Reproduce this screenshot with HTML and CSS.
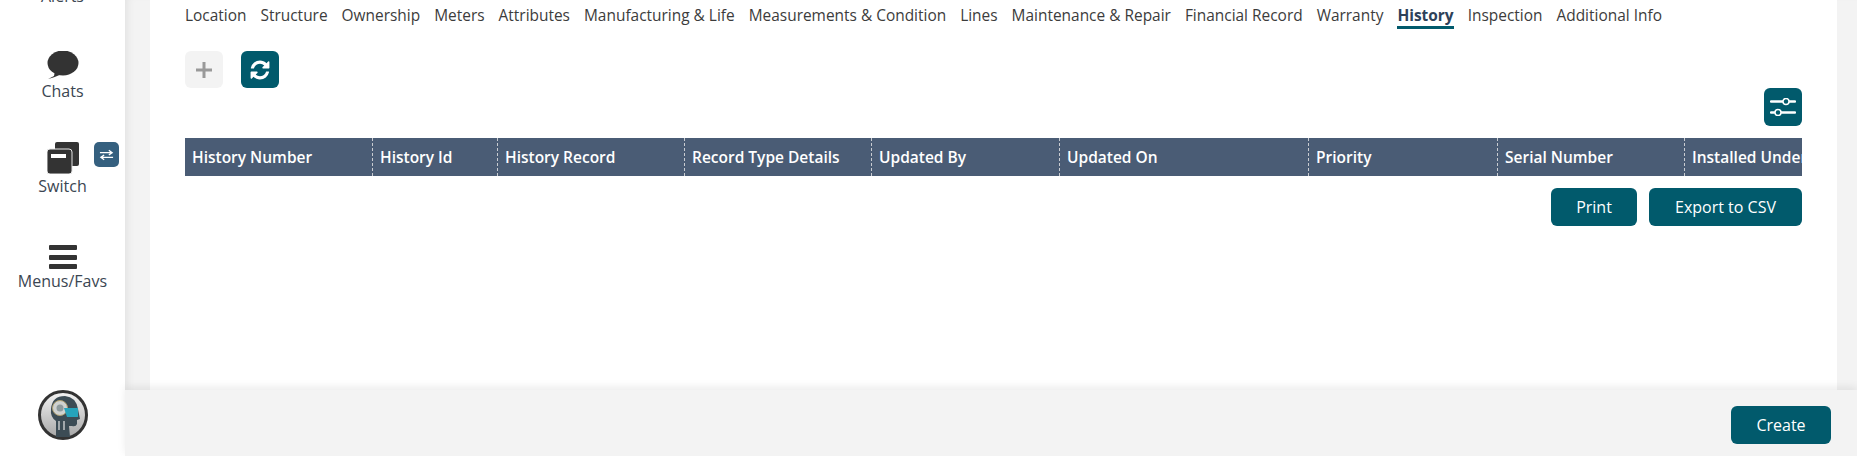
FILE: index.html
```html
<!DOCTYPE html>
<html lang="en">
<head>
  <meta charset="UTF-8" />
  <title>History</title>
  <link rel="stylesheet" href="styles.css">
</head>
<body>

  <nav class="sidebar">
    <div class="side-item side-alerts">
      <span class="side-label">Alerts</span>
    </div>
    <div class="side-item">
      <svg class="side-icon" viewBox="0 0 32 28" width="32" height="28">
        <ellipse cx="16" cy="12" rx="15.5" ry="12.5" fill="#333"/>
        <path d="M8 20 L7 25 L1 28 Q6 27 15 23 Z" fill="#333"/>
      </svg>
      <span class="side-label">Chats</span>
    </div>
    <div class="side-item">
      <svg class="side-icon" viewBox="0 0 32 32" width="32" height="32">
        <rect x="8" y="0" width="24" height="24" rx="2" fill="#333"/>
        <rect x="0" y="7" width="25" height="25" rx="3" fill="#333" stroke="#e6e6e6" stroke-width="1"/>
        <rect x="4" y="12" width="15" height="4" fill="#fff"/>
      </svg>
      <span class="side-label">Switch</span>
      <span class="switch-badge">
        <svg viewBox="0 0 16 12" width="15" height="12">
          <path d="M1 3.5H13M10.5 1L14 3.5L10.5 6M15 8.5H3M5.500 6L2 8.5L5.500 11" fill="none" stroke="#fff" stroke-width="1.4"/>
        </svg>
      </span>
    </div>
    <div class="side-item">
      <svg class="side-icon" viewBox="0 0 28 24" width="28" height="24">
        <rect y="0" width="28" height="5" rx="1" fill="#333"/>
        <rect y="10" width="28" height="5" rx="1" fill="#333"/>
        <rect y="19" width="28" height="5" rx="1" fill="#333"/>
      </svg>
      <span class="side-label">Menus/Favs</span>
    </div>
    <div class="avatar">
      <svg viewBox="0 0 50 50" width="50" height="50">
        <defs>
          <linearGradient id="avatarBg" x1="0" y1="0" x2="0" y2="1">
            <stop offset="0" stop-color="#f4f4f4"/>
            <stop offset="1" stop-color="#a5a5a5"/>
          </linearGradient>
        </defs>
        <circle cx="25" cy="25" r="23.500" fill="url(#avatarBg)" stroke="#333" stroke-width="3"/>
        <path d="M13 19 Q14 6 27 6 Q38 7 40 19 L42 29 L39 30 L39 34 Q38 37 34 36 L31 36 L32 47 L18 47 L18 31 Q12 27 13 19 Z" fill="#3c4c55"/>
        <circle cx="22" cy="18" r="7.500" fill="#cfd2d0" stroke="#b0a070" stroke-width="1"/>
        <circle cx="22" cy="18" r="3.500" fill="#8d9a9c"/>
        <path d="M26 18 L40 18 L40 27 L29 27 Z" fill="#26a3bb"/>
        <path d="M21 31V40M26 31V40" stroke="#e4e4e4" stroke-width="1.200"/>
      </svg>
    </div>
  </nav>

  <div class="main">
    <div class="work">
      <div class="panel">
        <ul class="tabs">
          <li>Location</li>
          <li>Structure</li>
          <li>Ownership</li>
          <li>Meters</li>
          <li>Attributes</li>
          <li>Manufacturing &amp; Life</li>
          <li>Measurements &amp; Condition</li>
          <li>Lines</li>
          <li>Maintenance &amp; Repair</li>
          <li>Financial Record</li>
          <li>Warranty</li>
          <li class="active">History</li>
          <li>Inspection</li>
          <li>Additional Info</li>
        </ul>

        <div class="toolbar">
          <button class="icon-btn disabled">
            <svg viewBox="0 0 16 16" width="16" height="16">
              <path d="M6.5 0h3v6.5H16v3H9.5V16h-3V9.500H0v-3h6.500z" fill="#999"/>
            </svg>
          </button>
          <button class="icon-btn">
            <svg viewBox="0 0 1792 1792" width="22" height="22">
              <path fill="#fff" d="M1639 1056q0 5-1 7-64 268-268 434.500t-478 166.500q-146 0-282.500-55t-243.500-157l-129 129q-19 19-45 19t-45-19-19-45v-448q0-26 19-45t45-19h448q26 0 45 19t19 45-19 45l-137 137q71 66 161 102t187 36q134 0 250-65t186-179q11-17 53-117 8-23 30-23h192q13 0 22.500 9.500t9.500 22.500zm25-800v448q0 26-19 45t-45 19h-448q-26 0-45-19t-19-45 19-45l138-138q-148-137-349-137-134 0-250 65t-186 179q-11 17-53 117-8 23-30 23h-199q-13 0-22.500-9.500t-9.500-22.500v-7q65-268 270-434.500t480-166.500q146 0 284 55.500t245 156.500l130-129q19-19 45-19t45 19 19 45z"/>
            </svg>
          </button>
        </div>

        <div class="settings-row">
          <button class="icon-btn">
            <svg viewBox="0 0 26 18" width="26" height="18">
              <path d="M1 3.500H25M1 14.500H25" stroke="#fff" stroke-width="2.500" stroke-linecap="round"/>
              <circle cx="16" cy="3.500" r="3" fill="#015a6c" stroke="#fff" stroke-width="1.500"/>
              <circle cx="8" cy="14.500" r="3" fill="#015a6c" stroke="#fff" stroke-width="1.500"/>
            </svg>
          </button>
        </div>

        <div class="grid-head">
          <div class="col c1">History Number</div>
          <div class="col c2">History Id</div>
          <div class="col c3">History Record</div>
          <div class="col c4">Record Type Details</div>
          <div class="col c5">Updated By</div>
          <div class="col c6">Updated On</div>
          <div class="col c7">Priority</div>
          <div class="col c8">Serial Number</div>
          <div class="col c9">Installed Under</div>
        </div>

        <div class="grid-actions">
          <button class="btn btn-print">Print</button>
          <button class="btn btn-export">Export to CSV</button>
        </div>
      </div>
    </div>

    <footer class="footer">
      <button class="btn btn-create">Create</button>
    </footer>
  </div>

</body>
</html>
```

FILE: styles.css
```css
* {
  box-sizing: border-box;
}

html, body {
  margin: 0;
  padding: 0;
  height: 456px;
  overflow: hidden;
}

body {
  display: flex;
  font-family: 'Open Sans', sans-serif;
  font-size: 14px;
  color: #333;
  background: #f3f3f3;
}

/* left menu */
.sidebar {
  position: relative;
  width: 125px;
  flex: none;
  height: 456px;
  background: white;
  overflow: hidden;
}

.side-item {
  position: relative;
  height: 95px;
  display: flex;
  flex-direction: column;
  align-items: center;
  justify-content: flex-end;
  width: 125px;
}

.side-alerts {
  height: 9px;
  overflow: visible;
  margin-top: -2px;
}

.side-label {
  font-size: 16px;
  line-height: 22px;
  color: #3b4652;
  white-space: nowrap;
}

.side-icon {
  display: block;
  margin-bottom: 1px;
}

.switch-badge {
  position: absolute;
  left: 94px;
  top: 40px;
  width: 25px;
  height: 25px;
  border-radius: 5px;
  background: #35607f;
  display: flex;
  align-items: center;
  justify-content: center;
}

.avatar {
  position: absolute;
  left: 38px;
  top: 390px;
  width: 50px;
  height: 50px;
}

.avatar svg {
  display: block;
}

/* main part */
.main {
  flex: 1;
  display: flex;
  flex-direction: column;
  min-width: 0;
  box-shadow: inset 8px 0 8px -6px rgba(0,0,0,0.08);
}

.work {
  height: 390px;
  padding: 0 20px 0 25px;
  flex: none;
  overflow: hidden;
}

.panel {
  height: 390px;
  background: white;
  padding: 0 35px;
}

.tabs {
  list-style: none;
  margin: 0;
  padding: 0;
  display: flex;
  gap: 14px;
  height: 51px;
  white-space: nowrap;
}

.tabs li {
  height: 29px;
  line-height: 30px;
  font-size: 15.45px;
  color: #3c3c3c;
}

.tabs li.active {
  font-weight: 700;
  color: #2d4159;
  border-bottom: 3px solid #015a6c;
}

.toolbar {
  display: flex;
  gap: 18px;
  height: 37px;
}

.toolbar .icon-btn {
  height: 37px;
}

.settings-row {
  display: flex;
  justify-content: flex-end;
  height: 50px;
}

.icon-btn {
  width: 38px;
  height: 38px;
  padding: 0;
  border: none;
  border-radius: 6px;
  background: #015a6c;
  display: flex;
  align-items: center;
  justify-content: center;
}

.icon-btn.disabled {
  background: #f3f3f3;
}

.grid-head {
  display: flex;
  height: 38px;
  background: #4a5c75;
  overflow: hidden;
}

.col {
  flex: none;
  padding: 0 7px;
  line-height: 38px;
  font-weight: 600;
  font-size: 15.5px;
  color: white;
  white-space: nowrap;
  border-right: 1px dashed #c9ccd1;
}

.c1 { width: 188px; }
.c2 { width: 125px; }
.c3 { width: 187px; }
.c4 { width: 187px; }
.c5 { width: 188px; }
.c6 { width: 249px; }
.c7 { width: 189px; }
.c8 { width: 187px; }
.c9 { width: 187px; border-right: none; }

.grid-actions {
  display: flex;
  justify-content: flex-end;
  gap: 12px;
  margin-top: 12px;
}

.btn {
  height: 38px;
  padding: 0;
  border: none;
  border-radius: 6px;
  background: #015a6c;
  color: white;
  font-family: 'Open Sans', sans-serif;
  font-size: 16px;
}

.btn-print { width: 86px; }
.btn-export { width: 153px; }
.btn-create { width: 100px; }

.footer {
  height: 66px;
  flex: none;
  display: flex;
  justify-content: flex-end;
  align-items: flex-start;
  padding: 16px 26px 0 0;
  background: #f3f3f3;
  box-shadow: 0 -3px 8px rgba(0,0,0,0.08);
  position: relative;
}
```
